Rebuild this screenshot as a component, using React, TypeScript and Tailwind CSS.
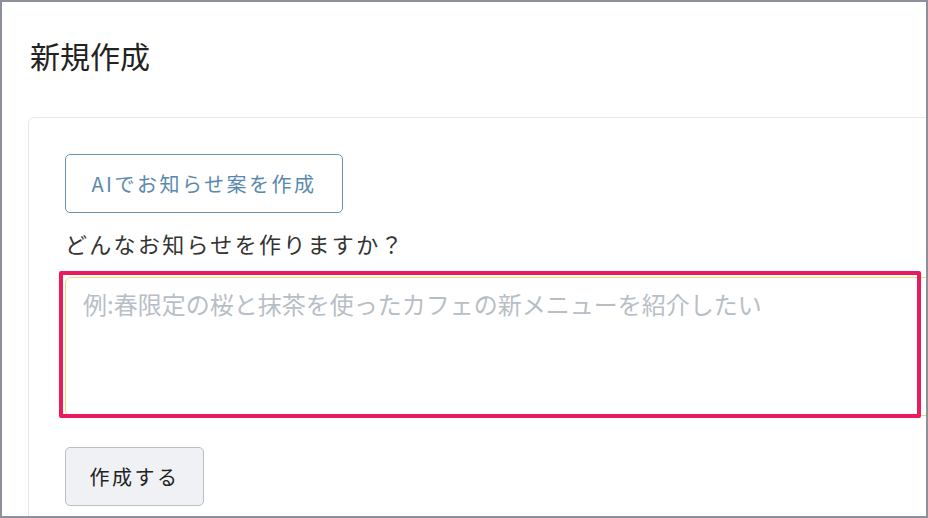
import React from 'react';

const App: React.FC = () => {
  return (
    <div
      className="relative w-[928px] h-[518px] overflow-hidden border-2 border-[#8c9099] bg-white"
      style={{ fontFamily: '"Noto Sans CJK JP", "Noto Sans", sans-serif' }}
    >
      {/* Page title */}
      <h1 className="pl-[28px] pt-[35px] text-[30px] leading-[36px] text-[#222]">新規作成</h1>

      {/* Form card */}
      <div className="ml-[26px] mt-[44px] w-[1000px] rounded-md border border-[#e6e8eb] bg-white pl-[36px] pt-[36px] pb-10">
        <button className="flex h-[59px] w-[278px] items-center justify-center rounded-[5px] border border-[#6a93b3] text-[20px] tracking-[2.5px] text-[#5a89ae]">
          AIでお知らせ案を作成
        </button>

        <label className="mt-[15px] block text-[22px] leading-[30px] tracking-[2.3px] text-[#333]">
          どんなお知らせを作りますか？
        </label>

        <textarea
          className="mt-[19px] block h-[139px] w-[920px] resize-none rounded-md border border-[#eedc78] px-[17px] py-[9px] text-[24px] leading-[34px] text-[#333] outline-none placeholder:text-[#b8bec6]"
          placeholder="例:春限定の桜と抹茶を使ったカフェの新メニューを紹介したい"
        />

        <button className="mt-[31px] flex h-[59px] w-[139px] items-center justify-center rounded-[5px] border border-[#b9bdc4] bg-[#eff1f5] text-[20px] tracking-[2.5px] text-[#222]">
          作成する
        </button>
      </div>

      {/* Highlight annotation over the textarea */}
      <div className="pointer-events-none absolute left-[57px] top-[269px] h-[147px] w-[862px] rounded-[2px] border-4 border-[#ea1a5c]" />
    </div>
  );
};

export default App;
